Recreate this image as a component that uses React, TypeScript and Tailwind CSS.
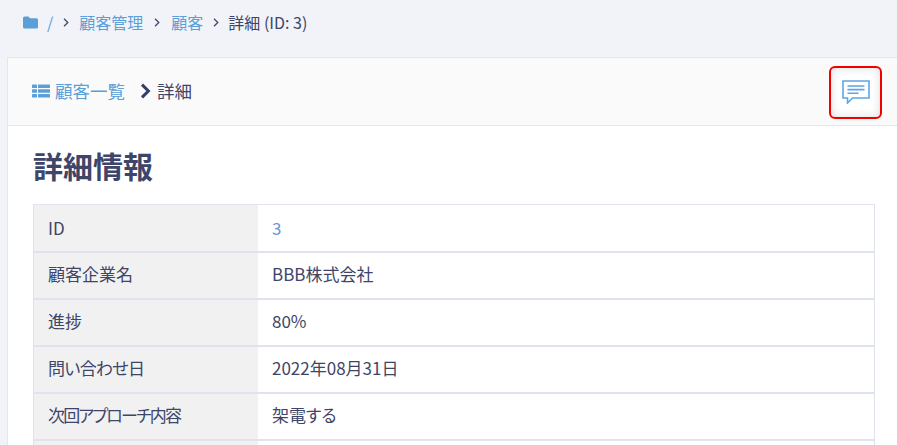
import React from "react";

const font = { fontFamily: '"Noto Sans CJK JP", "Noto Sans", sans-serif', fontFeatureSettings: '"palt"' };

const Chevron = ({ className = "mx-[11px]" }: { className?: string }) => (
  <svg width="6" height="9" viewBox="0 0 6 9" className={`${className} shrink-0`} fill="none" stroke="#3e4b6b" strokeWidth="1.3">
    <path d="M1 0.8 L4.8 4.5 L1 8.2" />
  </svg>
);

const rows: { k: string; v: string; link?: boolean; h: string; t?: string }[] = [
  { k: "ID", v: "3", link: true, h: "h-[48px]" },
  { k: "顧客企業名", v: "BBB株式会社", h: "h-[47px]" },
  { k: "進捗", v: "80%", h: "h-[47px]" },
  { k: "問い合わせ日", v: "2022年08月31日", h: "h-[47px]", t: "tracking-[-0.7px]" },
  { k: "次回アプローチ内容", v: "架電する", h: "h-[47px]", t: "tracking-[-1.8px]" },
  { k: "", v: "", h: "h-[47px]" },
];

export default function App() {
  return (
    <div className="h-[445px] w-[897px] overflow-hidden bg-[#f2f3f8] text-[#3e4569]" style={font}>
      <nav className="flex h-[57px] items-start pl-[23px] pt-[11px] text-[16px] leading-[23px]">
        <svg width="15" height="13" viewBox="0 0 15 13" className="mt-[5px] shrink-0" fill="#5b9fd9">
          <path d="M1.5 0.5 H5.5 L7 2.2 H13.5 A1.5 1.5 0 0 1 15 3.7 V11 A1.5 1.5 0 0 1 13.5 12.5 H1.5 A1.5 1.5 0 0 1 0 11 V2 A1.5 1.5 0 0 1 1.5 .5 Z" />
        </svg>
        <span className="ml-[9px] text-[#5b9fd9]">/</span>
        <span className="ml-[-1px] flex h-[23px] items-center"><Chevron /></span>
        <span className="ml-[-1px] text-[#5b9fd9]">顧客管理</span>
        <span className="flex h-[23px] items-center"><Chevron /></span>
        <span className="text-[#5b9fd9]">顧客</span>
        <span className="flex h-[23px] items-center"><Chevron className="ml-[10px] mr-[9px]" /></span>
        <span>詳細 (ID: 3)</span>
      </nav>

      <section className="ml-[7px] border-l border-t border-[#e4e6ef] bg-white">
        <header className="flex h-[68px] items-center justify-between border-b border-[#e4e6ef] bg-[#fafafa] pl-[24px] pr-[15px] pt-[1px]">
          <div className="mt-[-2px] flex items-center text-[17.5px]">
            <svg width="18" height="14" viewBox="0 0 18 14" className="mt-[-1px] shrink-0" fill="#5b9fd9">
              <rect x="0" y="0.5" width="5" height="3.6" rx="0.6" />
              <rect x="6" y="0.5" width="12" height="3.6" rx="0.6" />
              <rect x="0" y="5.2" width="5" height="3.6" rx="0.6" />
              <rect x="6" y="5.2" width="12" height="3.6" rx="0.6" />
              <rect x="0" y="9.9" width="5" height="3.6" rx="0.6" />
              <rect x="6" y="9.9" width="12" height="3.6" rx="0.6" />
            </svg>
            <span className="ml-[5px] text-[#5b9fd9]">顧客一覧</span>
            <svg width="11" height="16" viewBox="0 0 11 16" className="ml-[15px] shrink-0" fill="none" stroke="#34406a" strokeWidth="3">
              <path d="M2 1.6 L8.4 8 L2 14.4" />
            </svg>
            <span className="ml-[6px]">詳細</span>
          </div>
          <button className="flex h-[53px] w-[53px] items-center justify-center rounded-[6px] border-2 border-[#f00000] bg-white shadow-[inset_0_0_10px_rgba(0,0,0,0.14)]">
            <svg width="28" height="24" viewBox="0 0 28 24" fill="none" stroke="#5da5e6" strokeWidth="1.6">
              <path d="M1 1 H27 V18 H10.5 L5.5 23 V18 H1 Z" />
              <path d="M5.5 6 H22.5 M5.5 9.6 H22.5 M5.5 13.2 H16.5" />
            </svg>
          </button>
        </header>

        <div className="pl-[25px]">
          <h2 className="pb-[19px] pt-[20px] text-[30px] font-bold leading-[39px] text-[#3e4569]">詳細情報</h2>
          <table className="w-[842px] table-fixed border-separate border-spacing-0 border-t border-[#e2e5f0] text-[17px]">
            <tbody>
              {rows.map((r, i) => (
                <tr key={i} className={r.h}>
                  <th className={`w-[225px] border-b-2 border-l border-[#dfe3f0] bg-[#f1f1f1] pl-[14px] text-left font-normal ${i > 0 ? "pb-[3px]" : ""} ${r.t ?? ""}`}>{r.k}</th>
                  <td className={`border-b-2 border-r border-[#dfe3f0] pl-[14px] ${i > 0 ? "pb-[3px]" : ""} ${r.link ? "text-[#6f93d6]" : ""}`}>{r.v}</td>
                </tr>
              ))}
            </tbody>
          </table>
        </div>
      </section>
    </div>
  );
}
